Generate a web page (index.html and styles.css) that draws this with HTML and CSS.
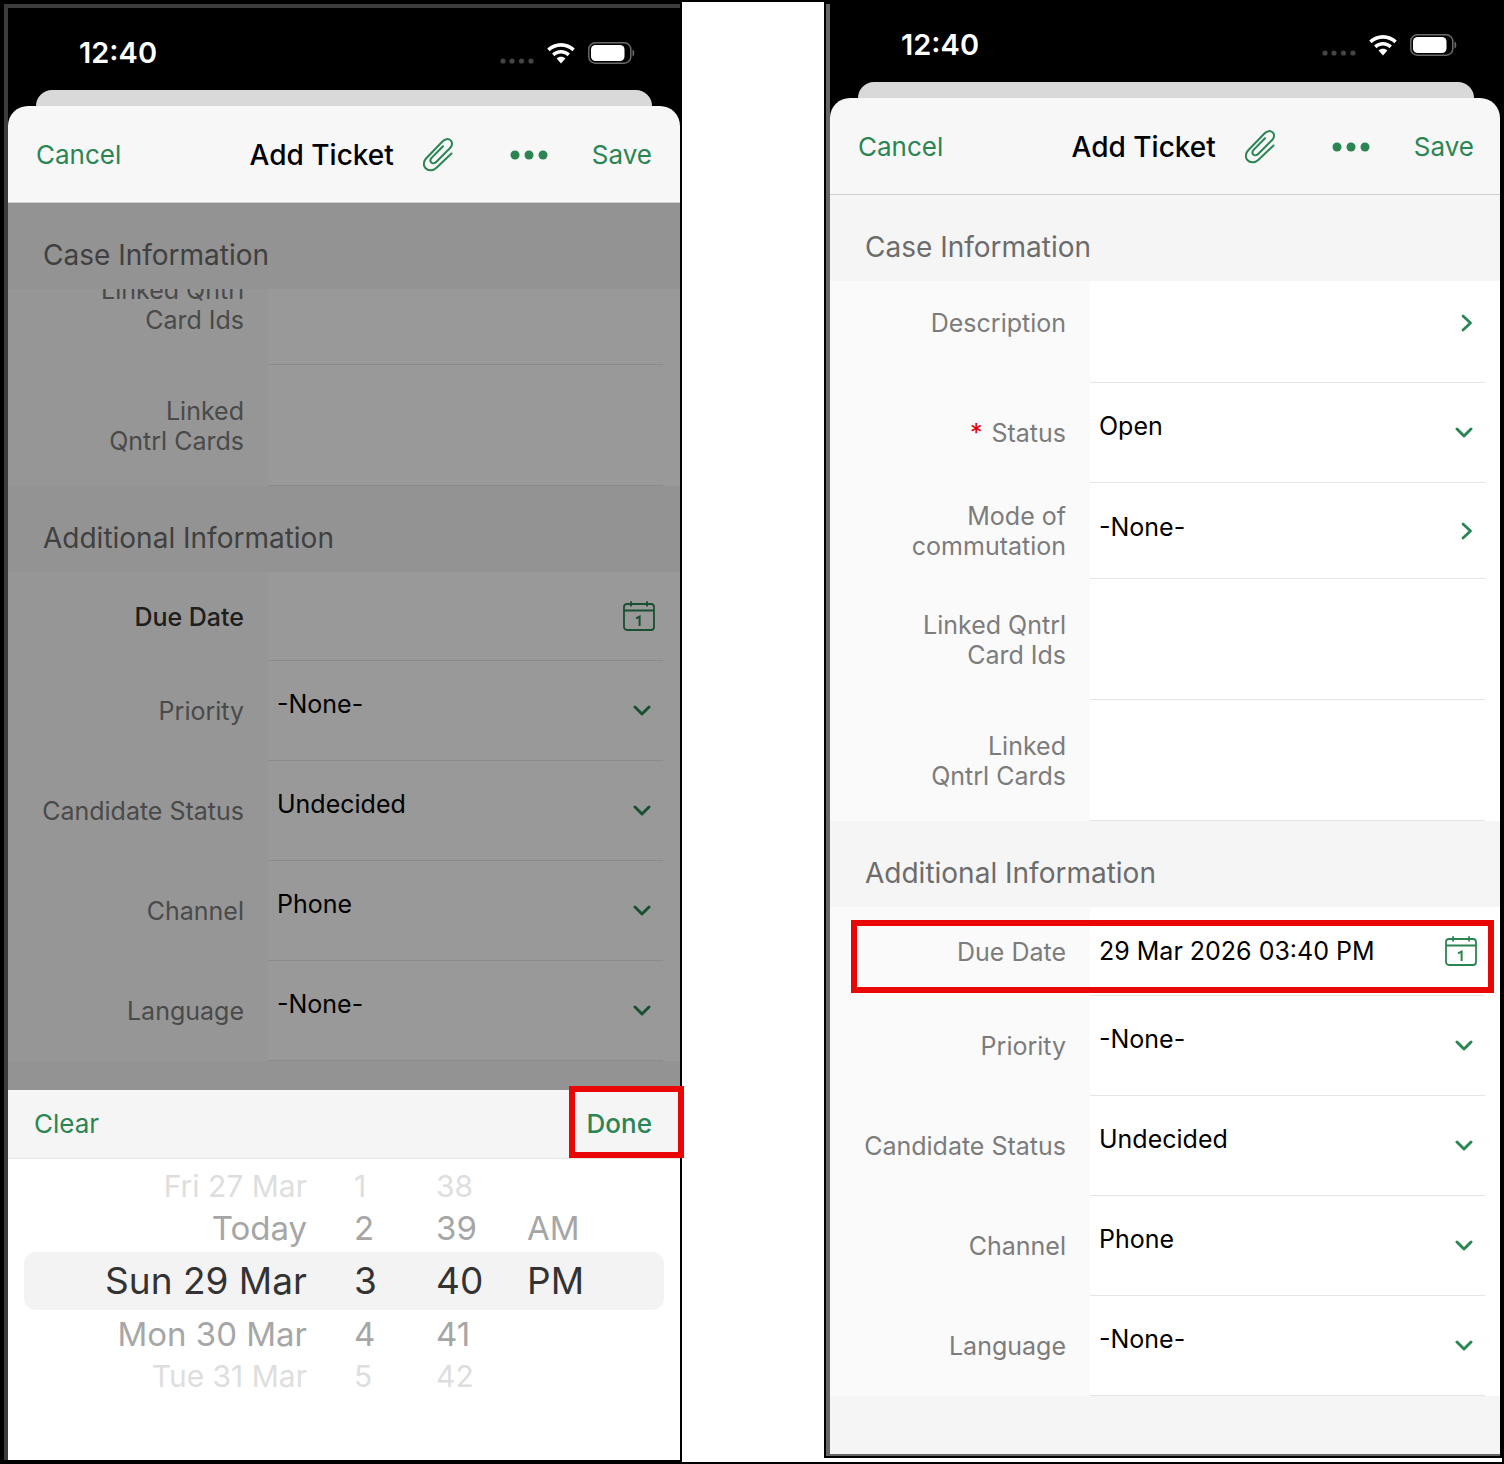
FILE: index.html
```html
<!DOCTYPE html>
<html lang="en">
<head>
<meta charset="utf-8">
<meta name="viewport" content="width=device-width, initial-scale=1">
<title>Add Ticket</title>
<link rel="stylesheet" href="styles.css">
</head>
<body>
<svg class="sprite" aria-hidden="true">
  <symbol id="wifi" viewBox="0 0 28 21">
    <path d="M14 0C8.700 0 3.800 2.100.2 5.500l2.400 2.700C5.600 5.400 9.600 3.700 14 3.700s8.400 1.700 11.400 4.500l2.400-2.700C24.200 2.100 19.300 0 14 0z"/>
    <path d="M14 7c-3.400 0-6.500 1.300-8.900 3.500l2.400 2.700c1.700-1.600 4-2.600 6.500-2.600s4.800 1 6.500 2.600l2.400-2.700C20.500 8.300 17.400 7 14 7z"/>
    <path d="M14 13.800c-1.700 0-3.200.6-4.400 1.700L14 20.600l4.400-5.100c-1.200-1.100-2.700-1.700-4.400-1.700z"/>
  </symbol>
  <symbol id="battery" viewBox="0 0 47 22">
    <rect x=".8" y=".8" width="42" height="20.400" rx="6.500" fill="none" stroke="#6a6a6a" stroke-width="1.500"/>
    <rect x="3" y="3" width="33.500" height="16" rx="4.500"/>
    <path d="M44.500 7.500c2.400.8 2.400 6.200 0 7z" fill="#6a6a6a"/>
  </symbol>
  <symbol id="cell" viewBox="0 0 34 8">
    <g fill="#444"><circle cx="3" cy="4" r="2.600"/><circle cx="12" cy="4" r="2.600"/><circle cx="21.500" cy="4" r="2.600"/><circle cx="31" cy="4" r="2.600"/></g>
  </symbol>
  <symbol id="clip" viewBox="0 0 30 34">
    <path d="M28.500 15.500 13.500 29.700c-3.500 3.300-8.300 3.300-10.900.6s-2.300-7 .9-10.300L19.700 3.300c2.400-2.500 6-2.900 8-.9s1.700 5.300-.6 7.600L13.200 24c-1.500 1.500-3.700 1.700-4.900.5s-1-3.300.5-4.900L20 8.200" fill="none" stroke="currentColor" stroke-width="2" stroke-linecap="round" stroke-linejoin="round"/>
  </symbol>
  <symbol id="more" viewBox="0 0 38 10">
    <circle cx="5" cy="5" r="4.500"/><circle cx="19" cy="5" r="4.500"/><circle cx="33" cy="5" r="4.500"/>
  </symbol>
  <symbol id="down" viewBox="0 0 18 11">
    <path d="m2 2 7 7 7-7" fill="none" stroke="currentColor" stroke-width="2.900" stroke-linecap="round" stroke-linejoin="round"/>
  </symbol>
  <symbol id="next" viewBox="0 0 12 18">
    <path d="m2 2 7.500 7L2 16" fill="none" stroke="currentColor" stroke-width="2.800" stroke-linecap="round" stroke-linejoin="round"/>
  </symbol>
  <symbol id="calendar" viewBox="0 0 32 30">
    <g fill="none" stroke="currentColor" stroke-width="1.800"><rect x="1" y="3" width="30" height="26" rx="3"/><path d="M1 9.500h30M8 .3v5.200M24 .3v5.200"/></g>
    <path d="M13 17.300l3.600-1.800V25" fill="none" stroke="currentColor" stroke-width="2"/>
  </symbol>
</svg>

<main class="page">
  <section class="frame frame-left" aria-label="Choosing the due date">
    <div class="phone">
      <div class="statusbar">
        <span class="time">12:40</span>
        <svg class="i-cell"><use href="#cell"/></svg>
        <svg class="i-wifi"><use href="#wifi"/></svg>
        <svg class="i-battery"><use href="#battery"/></svg>
      </div>
      <div class="under-sheet"></div>
      <header class="nav">
        <button type="button" class="link cancel">Cancel</button>
        <h1>Add Ticket</h1>
        <button type="button" class="clip" aria-label="Attach"><svg class="i-clip"><use href="#clip"/></svg></button>
        <button type="button" class="more" aria-label="More"><svg class="i-more"><use href="#more"/></svg></button>
        <button type="button" class="link">Save</button>
      </header>
      <form class="form dimmed">
        <h2>Case Information</h2>
        <div class="rows scrolled">
          <div class="row tall"><label for="l-ids">Linked Qntrl<br>Card Ids</label><div class="field"><input id="l-ids" type="text"></div></div>
          <div class="row tall"><label for="l-cards">Linked<br>Qntrl Cards</label><div class="field"><input id="l-cards" type="text"></div></div>
        </div>
        <h2>Additional Information</h2>
        <div class="rows">
          <div class="row date"><label class="active" for="l-due">Due Date</label><div class="field"><input id="l-due" type="text"><svg class="i-calendar"><use href="#calendar"/></svg></div></div>
          <div class="row"><label for="l-priority">Priority</label><div class="field"><select id="l-priority"><option>-None-</option></select><svg class="i-down"><use href="#down"/></svg></div></div>
          <div class="row"><label for="l-candidate">Candidate Status</label><div class="field"><select id="l-candidate"><option>Undecided</option></select><svg class="i-down"><use href="#down"/></svg></div></div>
          <div class="row"><label for="l-channel">Channel</label><div class="field"><select id="l-channel"><option>Phone</option></select><svg class="i-down"><use href="#down"/></svg></div></div>
          <div class="row"><label for="l-language">Language</label><div class="field"><select id="l-language"><option>-None-</option></select><svg class="i-down"><use href="#down"/></svg></div></div>
        </div>
      </form>
      <div class="sheet">
        <div class="toolbar">
          <button type="button" class="link">Clear</button>
          <div class="done"><button type="button" class="link strong">Done</button></div>
        </div>
        <div class="picker">
          <div class="wheel far"><span>Fri 27 Mar</span><span>1</span><span>38</span><span></span></div>
          <div class="wheel near"><span>Today</span><span>2</span><span>39</span><span>AM</span></div>
          <div class="wheel current"><span>Sun 29 Mar</span><span>3</span><span>40</span><span>PM</span></div>
          <div class="wheel near"><span>Mon 30 Mar</span><span>4</span><span>41</span><span></span></div>
          <div class="wheel far"><span>Tue 31 Mar</span><span>5</span><span>42</span><span></span></div>
        </div>
      </div>
    </div>
  </section>

  <section class="frame frame-right" aria-label="Due date filled in">
    <div class="phone">
      <div class="statusbar">
        <span class="time">12:40</span>
        <svg class="i-cell"><use href="#cell"/></svg>
        <svg class="i-wifi"><use href="#wifi"/></svg>
        <svg class="i-battery"><use href="#battery"/></svg>
      </div>
      <div class="under-sheet"></div>
      <header class="nav">
        <button type="button" class="link cancel">Cancel</button>
        <h1>Add Ticket</h1>
        <button type="button" class="clip" aria-label="Attach"><svg class="i-clip"><use href="#clip"/></svg></button>
        <button type="button" class="more" aria-label="More"><svg class="i-more"><use href="#more"/></svg></button>
        <button type="button" class="link">Save</button>
      </header>
      <form class="form">
        <h2>Case Information</h2>
        <div class="rows">
          <div class="row description"><label for="r-description">Description</label><div class="field"><input id="r-description" type="text"><svg class="i-next"><use href="#next"/></svg></div></div>
          <div class="row"><label for="r-status"><span class="required">*</span> Status</label><div class="field"><select id="r-status"><option>Open</option></select><svg class="i-down"><use href="#down"/></svg></div></div>
          <div class="row mode"><label for="r-mode">Mode of<br>commutation</label><div class="field"><button type="button" id="r-mode">-None-</button><svg class="i-next"><use href="#next"/></svg></div></div>
          <div class="row tall"><label for="r-ids">Linked Qntrl<br>Card Ids</label><div class="field"><input id="r-ids" type="text"></div></div>
          <div class="row tall"><label for="r-cards">Linked<br>Qntrl Cards</label><div class="field"><input id="r-cards" type="text"></div></div>
        </div>
        <h2>Additional Information</h2>
        <div class="rows">
          <div class="row date marked"><label for="r-due">Due Date</label><div class="field"><input id="r-due" type="text" value="29 Mar 2026 03:40 PM"><svg class="i-calendar"><use href="#calendar"/></svg></div></div>
          <div class="row"><label for="r-priority">Priority</label><div class="field"><select id="r-priority"><option>-None-</option></select><svg class="i-down"><use href="#down"/></svg></div></div>
          <div class="row"><label for="r-candidate">Candidate Status</label><div class="field"><select id="r-candidate"><option>Undecided</option></select><svg class="i-down"><use href="#down"/></svg></div></div>
          <div class="row"><label for="r-channel">Channel</label><div class="field"><select id="r-channel"><option>Phone</option></select><svg class="i-down"><use href="#down"/></svg></div></div>
          <div class="row"><label for="r-language">Language</label><div class="field"><select id="r-language"><option>-None-</option></select><svg class="i-down"><use href="#down"/></svg></div></div>
        </div>
      </form>
    </div>
  </section>
</main>
</body>
</html>
```
FILE: styles.css
```css
:root {
  --green: #2b8553;
  --red: #eb0606;
  --panel: #f5f5f5;
  --label: #7c7c7c;
  --line: #e6e6e6;
}

* {
  box-sizing: border-box;
}

body {
  margin: 0;
  font-family: Inter, "Liberation Sans", sans-serif;
  font-size: 26px;
  line-height: 30px;
  color: #000;
  background: #fff;
}

h1,
h2 {
  margin: 0;
  font-weight: 400;
}

button,
input,
select {
  margin: 0;
  padding: 0;
  border: 0;
  outline: 0;
  background: none;
  color: inherit;
  font: inherit;
  appearance: none;
}

svg {
  display: block;
  flex: none;
  fill: currentColor;
}

.sprite {
  position: absolute;
  width: 0;
  height: 0;
}

.page {
  display: grid;
  grid-template-columns: minmax(0, 680fr) minmax(0, 678fr);
  column-gap: 142px;
  min-height: 100vh;
  border: 2px solid #000;
}

.frame {
  display: flex;
  border: 2px solid #000;
}

.frame-right {
  margin-bottom: 4px;
}

.phone {
  display: flex;
  flex: 1;
  flex-direction: column;
  min-width: 0;
  background: linear-gradient(#000 140px, var(--panel) 140px);
}

.frame-left .phone {
  border-top: 4px solid #3c3c3c;
  border-left: 4px solid #3c3c3c;
}

.frame-right .phone {
  border-bottom: 2px solid #666;
  border-left: 4px solid #666;
}

/* Status bar */
.statusbar {
  display: flex;
  align-items: center;
  height: 82px;
  padding: 8px 45px 0 71px;
  color: #fff;
}

.frame-right .statusbar {
  height: 78px;
  padding: 4px 43px 0 71px;
}

.time {
  flex: 1;
  font-size: 29px;
  font-weight: 600;
}

.i-cell {
  width: 34px;
  height: 8px;
  margin: 15px 13px 0 0;
}

.i-wifi {
  width: 28px;
  height: 21px;
  margin-right: 13px;
}

.i-battery {
  width: 47px;
  height: 22px;
}

.under-sheet {
  height: 16px;
  margin: 0 28px;
  border-radius: 16px 16px 0 0;
  background: #d9d9d9;
}

.frame-right .under-sheet {
  margin-right: 26px;
}

/* Navigation bar */
.nav {
  display: flex;
  align-items: center;
  height: 97px;
  padding: 2px 28px 0;
  border-bottom: 1px solid #cfcfcf;
  border-radius: 20px 20px 0 0;
  background: #f7f7f7;
}

.frame-right .nav {
  padding-right: 26px;
}

.nav h1 {
  font-size: 28px;
  font-weight: 500;
}

.link {
  color: var(--green);
}

.strong {
  font-weight: 500;
}

.cancel {
  flex: 1;
  text-align: left;
}

.clip,
.more {
  color: var(--green);
}

.clip {
  margin: 0 57px 0 29px;
}

.more {
  margin-right: 44px;
}

.i-clip {
  width: 30px;
  height: 34px;
}

.i-more {
  width: 38px;
  height: 10px;
}

/* Form */
.form {
  position: relative;
  background: var(--panel);
}

.dimmed {
  padding-bottom: 29px;
}

.dimmed::after {
  content: "";
  position: absolute;
  inset: 0;
  background: rgba(0, 0, 0, 0.4);
}

.form h2 {
  height: 86px;
  padding: 37px 35px 0;
  color: #6c6c6c;
  font-size: 28px;
}

.rows {
  overflow: hidden;
  background: #fff;
  font-size: 25px;
}

.scrolled .row:first-child {
  margin-top: -45px;
}

.row {
  position: relative;
  display: flex;
  height: 100px;
  background: linear-gradient(90deg, #fafafa 260px, #fff 260px);
}

.row label {
  align-self: center;
  width: 260px;
  padding-right: 24px;
  color: var(--label);
  text-align: right;
}

.row .active {
  color: #333;
  font-weight: 500;
}

.required {
  margin-right: 2px;
  color: #e00000;
}

.field {
  display: flex;
  flex: 1;
  align-items: center;
  min-width: 0;
  margin-right: 15px;
  padding: 0 12px 0 9px;
  border-bottom: 1px solid var(--line);
  color: var(--green);
}

.frame-left .field {
  margin-right: 17px;
}

.field input,
.field select,
.field button {
  flex: 1;
  min-width: 0;
  height: 100%;
  color: #000;
  text-align: left;
}

.field select {
  padding-bottom: 14px;
}

.field button {
  padding-bottom: 8px;
}

.tall {
  height: 121px;
}

.date {
  height: 89px;
}

.date .field {
  padding-right: 8px;
}

.mode {
  height: 96px;
}

.description {
  height: 102px;
}

.description label,
.description .field {
  padding-bottom: 18px;
}

.marked::after {
  content: "";
  position: absolute;
  inset: 13px 6px 3px 21px;
  border: 6px solid var(--red);
  pointer-events: none;
}

.i-down {
  width: 18px;
  height: 11px;
}

.i-next {
  width: 12px;
  height: 18px;
}

.i-calendar {
  width: 32px;
  height: 30px;
}

/* Date picker sheet */
.sheet {
  flex: 1;
  background: #fff;
}

.toolbar {
  display: flex;
  align-items: center;
  justify-content: space-between;
  height: 69px;
  padding: 0 28px 0 26px;
  border-bottom: 1px solid var(--line);
  background: var(--panel);
}

.done {
  position: relative;
}

.done::after {
  content: "";
  position: absolute;
  inset: -23px -32px -19px -18px;
  border: 6px solid var(--red);
  pointer-events: none;
}

.picker {
  padding: 9px 16px 66px;
}

.wheel {
  display: grid;
  grid-template-columns: 283fr 129fr 91fr 137fr;
  align-items: center;
}

.wheel span:nth-child(1) {
  text-align: right;
}

.wheel span:nth-child(2) {
  padding-left: 47px;
}

.current {
  height: 58px;
  border-radius: 12px;
  background: #f3f3f3;
  color: #333;
  font-size: 37px;
}

.near {
  height: 48px;
  color: #a6a6a6;
  font-size: 33px;
}

.far {
  height: 36px;
  color: #dedede;
  font-size: 30px;
}
```
